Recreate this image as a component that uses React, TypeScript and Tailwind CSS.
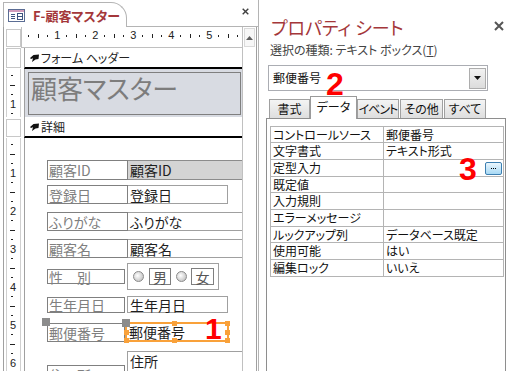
import React from "react"

const jp = "[font-family:'Noto_Sans_CJK_JP','Noto_Sans',sans-serif] [font-feature-settings:'palt']"
const num = "[font-family:'Liberation_Sans',Arial,sans-serif]"

const props = [
  ["コントロールソース", "郵便番号", "h-[16px]"],
  ["文字書式", "テキスト形式", "h-[17px]"],
  ["定型入力", "", "h-[17px]"],
  ["既定値", "", "h-[16px]"],
  ["入力規則", "", "h-[17px]"],
  ["エラーメッセージ", "", "h-[17px]"],
  ["ルックアップ列", "データベース既定", "h-[16px]"],
  ["使用可能", "はい", "h-[17px]"],
  ["編集ロック", "いいえ", "h-[17px]"],
]

function FormIcon() {
  return (
    <svg width="17" height="13" viewBox="0 0 17 13">
      <rect x="0.5" y="0.5" width="16" height="12" fill="#fff" stroke="#5b6d94" />
      <rect x="1" y="1" width="15" height="2" fill="#d39cbb" />
      <path d="M3 5.5h4M3 7.5h4M3 9.5h4" stroke="#3f5580" />
      <rect x="9.5" y="4.5" width="5" height="6" fill="none" stroke="#3f5580" />
      <path d="M9.5 7.5h5" stroke="#3f5580" />
    </svg>
  )
}

function Marker() {
  return (
    <svg width="9" height="8" viewBox="0 0 9 8">
      <path d="M9 0.5 L3.5 1 L0 4 L1 5 L3 4.2 L2 8 L5.5 5.5 L8.5 5 Z" fill="#111" />
    </svg>
  )
}

function Close({ size, stroke }: { size: number; stroke: string }) {
  return (
    <svg width={size} height={size} viewBox="0 0 10 10">
      <path d="M1 1 L9 9 M9 1 L1 9" stroke={stroke} strokeWidth="2" />
    </svg>
  )
}

function HRuler() {
  const cells = []
  for (let i = 1; i <= 23; i++) {
    cells.push(
      <div key={i} className="w-[9.5px] shrink-0 flex justify-center items-center">
        {i % 4 === 0 ? (
          <span className={`${num} text-[11px] leading-none text-[#222]`}>{i / 4}</span>
        ) : i % 2 === 0 ? (
          <div className="w-px h-[4px] bg-[#222]" />
        ) : (
          <div className="w-px h-[2px] bg-[#222]" />
        )}
      </div>
    )
  }
  return <div className="flex h-full pl-[2px] pb-[3px] items-center overflow-hidden">{cells}</div>
}

function VRuler({ count }: { count: number }) {
  const cells = []
  for (let i = 1; i <= count; i++) {
    cells.push(
      <div key={i} className="h-[9.5px] shrink-0 flex items-center">
        {i % 4 === 0 ? (
          <span className={`${num} text-[11px] leading-none text-[#222]`}>{i / 4}</span>
        ) : i % 2 === 0 ? (
          <div className="w-[5px] h-px bg-[#222]" />
        ) : (
          <div className="ml-px w-[2px] h-px bg-[#222]" />
        )}
      </div>
    )
  }
  return (
    <div className="ml-[2px] w-[15px] h-full border-x border-[#d0d0d0] pl-[3px] pt-[2px] flex flex-col overflow-hidden">
      {cells}
    </div>
  )
}

function RulerBox() {
  return <div className="ml-[2px] w-[15px] h-full border border-[#c8c8c8]" />
}

function Lbl({ children, className = "" }: { children: React.ReactNode; className?: string }) {
  return (
    <div className={`border border-[#808080] text-[#7f7f7f] text-[14px] leading-none pl-px flex items-center shrink-0 whitespace-nowrap ${className}`}>
      {children}
    </div>
  )
}

function Txt({ children, className = "" }: { children: React.ReactNode; className?: string }) {
  return (
    <div className={`border border-[#8c8c8c] text-[#1f1f1f] text-[14px] leading-none pl-[2px] flex items-center shrink-0 whitespace-nowrap ${className}`}>
      {children}
    </div>
  )
}

function Radio() {
  return (
    <div className="w-[11px] h-[11px] rounded-full border border-[#8a8a8a] bg-[radial-gradient(circle_at_40%_40%,#ffffff,#b4b4b4)] shrink-0" />
  )
}

function Handle({ className }: { className: string }) {
  return <div className={`absolute w-[5px] h-[5px] bg-[#f9a13a] ${className}`} />
}

function DesignView() {
  return (
    <div className="w-[258px] h-full flex flex-col shrink-0">
      {/* document tab */}
      <div className="h-[27px] flex items-end shrink-0">
        <div className="ml-[3px] w-[124px] h-[25px] border-l border-t border-r border-[#b4b4b4] rounded-tr-[16px] bg-white flex items-center pl-[4px] gap-[8px]">
          <FormIcon />
          <span className="text-[13px] font-bold text-[#a4373a] leading-none">F-顧客マスター</span>
        </div>
        <div className="flex-1 h-full border-b border-[#b4b4b4] flex items-center justify-end pr-[9px] pb-[3px]">
          <Close size={7} stroke="#404040" />
        </div>
      </div>

      <div className="flex-1 min-h-0 flex ml-[3px] border-l border-[#a0a0a0]">
        <div className="w-[238px] flex flex-col overflow-hidden">
          {/* ruler */}
          <div className="flex h-[21px] shrink-0">
            <div className="w-[20px] pt-[2px] pb-[1px]">
              <RulerBox />
            </div>
            <div className="flex-1 border-l border-b border-[#c0c0c0]">
              <HRuler />
            </div>
          </div>

          {/* form header bar */}
          <div className="flex h-[21px] shrink-0">
            <div className="w-[20px] pb-[1px]">
              <RulerBox />
            </div>
            <div className="flex-1 border-l border-[#a0a0a0] border-b-2 border-b-black flex items-center pl-[5px] gap-[2px] text-[12px] text-[#222]">
              <Marker />
              <span className="leading-none">フォーム ヘッダー</span>
            </div>
          </div>

          {/* form header */}
          <div className="flex h-[48px] shrink-0">
            <div className="w-[20px]">
              <VRuler count={5} />
            </div>
            <div className="flex-1 border-l border-[#a0a0a0] bg-[#d8dbe2] pt-[3px] pl-[3px] pb-[2px]">
              <div className="w-[213px] h-full border border-[#7f7f7f] text-[26px] leading-none text-[#7d7d7d] pl-[2px] pt-[2px]">
                顧客マスター
              </div>
            </div>
          </div>

          {/* detail bar */}
          <div className="flex h-[21px] shrink-0">
            <div className="w-[20px] pt-[2px] pb-[1px]">
              <RulerBox />
            </div>
            <div className="flex-1 border-l border-[#a0a0a0] border-b-2 border-b-black flex items-center pl-[5px] gap-[2px] text-[12px] text-[#222]">
              <Marker />
              <span className="leading-none">詳細</span>
            </div>
          </div>

          {/* detail */}
          <div className="flex flex-1 min-h-0">
            <div className="w-[20px]">
              <VRuler count={26} />
            </div>
            <div className="flex-1 border-l border-[#a0a0a0] bg-white overflow-hidden pl-[22px] flex flex-col">
              <div className="mt-[22px] flex h-[20px] shrink-0">
                <Lbl className="w-[81px]">顧客ID</Lbl>
                <Txt className="w-[120px] border-l-0 bg-[#d4d4d4]">顧客ID</Txt>
              </div>
              <div className="mt-[5px] flex h-[19px] shrink-0">
                <Lbl className="w-[81px]">登録日</Lbl>
                <Txt className="w-[100px] border-l-0 border-[#a0a0a0]">登録日</Txt>
              </div>
              <div className="mt-[8px] flex h-[19px] shrink-0">
                <Lbl className="w-[81px]">ふりがな</Lbl>
                <Txt className="w-[120px] border-l-0 border-[#a0a0a0]">ふりがな</Txt>
              </div>
              <div className="mt-[8px] flex h-[19px] shrink-0">
                <Lbl className="w-[81px]">顧客名</Lbl>
                <Txt className="w-[120px] border-l-0 border-[#a0a0a0]">顧客名</Txt>
              </div>
              <div className="mt-[5px] flex items-start h-[27px] shrink-0">
                <Lbl className="mt-[6px] w-[78px] h-[15px]">性　別</Lbl>
                <div className="ml-[2px] w-[92px] h-[27px] border border-[#a0a0a0] flex items-center pl-[5px]">
                  <Radio />
                  <div className="ml-[5px] w-[22px] h-[17px] border border-[#7f7f7f] text-[14px] leading-none text-[#555] flex items-center justify-center">男</div>
                  <div className="ml-[5px]"><Radio /></div>
                  <div className="ml-[4px] w-[23px] h-[17px] border border-[#7f7f7f] text-[14px] leading-none text-[#555] flex items-center justify-center">女</div>
                </div>
              </div>
              <div className="mt-[6px] flex items-start h-[17px] shrink-0">
                <Lbl className="mt-px w-[78px] h-[16px]">生年月日</Lbl>
                <Txt className="ml-[2px] w-[101px] h-[17px] border-[#a0a0a0]">生年月日</Txt>
              </div>
              <div className="mt-[9px] flex items-start h-[20px] shrink-0 relative">
                <div className="absolute -left-[5px] -top-[4px] w-[8px] h-[8px] bg-[#8c8c8c]" />
                <Lbl className="mt-px w-[78px] h-[19px]">郵便番号</Lbl>
                <div className="relative w-[104px] h-[20px] border-2 border-[#f9a13a] text-[14px] leading-none text-[#1f1f1f] pl-[2px] flex items-center">
                  郵便番号
                  <div className="absolute -left-[5px] -top-[5px] w-[8px] h-[8px] bg-[#8c8c8c]" />
                  <Handle className="left-[45px] -top-[3px]" />
                  <Handle className="-right-[3px] -top-[3px]" />
                  <Handle className="-left-[3px] top-[6px]" />
                  <Handle className="-right-[3px] top-[6px]" />
                  <Handle className="-left-[3px] -bottom-[3px]" />
                  <Handle className="left-[45px] -bottom-[3px]" />
                  <Handle className="-right-[3px] -bottom-[3px]" />
                  <span className={`absolute left-[78px] -top-[10px] ${num} text-[30px] font-bold leading-none text-[#ff0000]`}>1</span>
                </div>
              </div>
              <div className="mt-[9px] flex items-start shrink-0">
                <Lbl className="mt-[14px] w-[78px] h-[19px]">住　所</Lbl>
                <Txt className="ml-[2px] w-[120px] h-[30px] items-start pt-[2px] border-[#a0a0a0]">住所</Txt>
              </div>
            </div>
          </div>
        </div>

        {/* scrollbar */}
        <div className="w-[15px] flex flex-col border-l border-r border-[#c0c0c0] border-r-[#a0a0a0] bg-white">
          <div className="h-[19px] m-px border border-[#dadada] bg-[#f7f7f7] flex items-center justify-center">
            <svg width="7" height="4" viewBox="0 0 7 4">
              <path d="M0 4 L3.5 0 L7 4 Z" fill="#606060" />
            </svg>
          </div>
        </div>
      </div>
    </div>
  )
}

function PropertySheet() {
  const tabs = ["書式", "データ", "イベント", "その他", "すべて"]
  return (
    <div className="flex-1 h-full border-l border-[#b4b4b4] flex flex-col pl-[7px] pr-[7px]">
      <div className="pt-[15px] flex justify-between items-start">
        <span className="ml-[5px] text-[18px] leading-[24px] text-[#a4373a]">プロパティ シート</span>
        <div className="mt-[6px] mr-[2px]">
          <Close size={10} stroke="#555" />
        </div>
      </div>
      <div className="ml-[4px] mt-[3px] text-[12px] leading-[16px] text-[#444]">
        選択の種類: テキスト ボックス(<span className="underline">T</span>)
      </div>

      <div className="relative ml-[2px] mt-[7px] w-[220px] h-[26px] border border-[#abadb3] flex items-center justify-between pl-[4px] pr-px">
        <span className="text-[12px] leading-none text-[#111]">郵便番号</span>
        <div className="w-[17px] h-[21px] border border-[#adadad] bg-gradient-to-b from-[#f2f2f2] to-[#dcdcdc] flex items-center justify-center">
          <svg width="7" height="4" viewBox="0 0 7 4">
            <path d="M0 0 L7 0 L3.5 4 Z" fill="#111" />
          </svg>
        </div>
        <span className={`absolute left-[57px] top-[2px] ${num} text-[32px] font-bold leading-none text-[#ff0000]`}>2</span>
      </div>

      <div className="mt-[5px] h-[23px] flex items-end pl-[3px] relative z-10 -mb-px">
        {tabs.map((t, i) =>
          i === 1 ? (
            <div key={t} className="w-[47px] h-[23px] pb-[2px] border border-b-0 border-[#9a9a9a] bg-white text-[12px] leading-none text-[#111] flex items-center justify-center">
              {t}
            </div>
          ) : (
            <div
              key={t}
              className={`${i === 0 ? "w-[41px]" : i === 2 ? "w-[42px] tracking-[-1px]" : i === 3 ? "ml-px w-[43px]" : "ml-px w-[42px]"} h-[19px] mb-px border border-b-0 border-[#a0a0a0] bg-gradient-to-b from-[#f4f4f4] to-[#dedede] text-[12px] leading-none text-[#111] flex items-center justify-center whitespace-nowrap`}
            >
              {t}
            </div>
          )
        )}
      </div>

      <div className="flex-1 border border-b-0 border-[#8e8e8e] bg-white pt-[7px] pl-[3px]">
        <div className="w-[234px] border-x border-b border-[#b4b4b4] text-[12px] leading-none text-[#111]">
          {props.map(([k, v, h]) => (
            <div key={k} className={`${h} flex border-t border-[#b4b4b4]`}>
              <div className="w-[113px] border-r border-[#b4b4b4] pl-[2px] flex items-center whitespace-nowrap">{k}</div>
              <div className="flex-1 pl-[2px] flex items-center justify-between relative whitespace-nowrap">
                <span>{v}</span>
                {k === "定型入力" && (
                  <>
                    <span className={`absolute left-[75px] -top-[7px] ${num} text-[32px] font-bold leading-none text-[#ff0000]`}>3</span>
                    <div className="mr-px w-[17px] h-[13px] rounded-[2px] border border-[#3c7fb1] bg-gradient-to-b from-[#eaf6fd] to-[#a7d9f5] flex items-center justify-center gap-px">
                      <div className="w-px h-px bg-black" />
                      <div className="w-px h-px bg-black" />
                      <div className="w-px h-px bg-black" />
                    </div>
                  </>
                )}
              </div>
            </div>
          ))}
        </div>
      </div>
    </div>
  )
}

export default function App() {
  return (
    <div className={`w-[513px] h-[371px] overflow-hidden bg-white flex ${jp}`}>
      <DesignView />
      <PropertySheet />
    </div>
  )
}
